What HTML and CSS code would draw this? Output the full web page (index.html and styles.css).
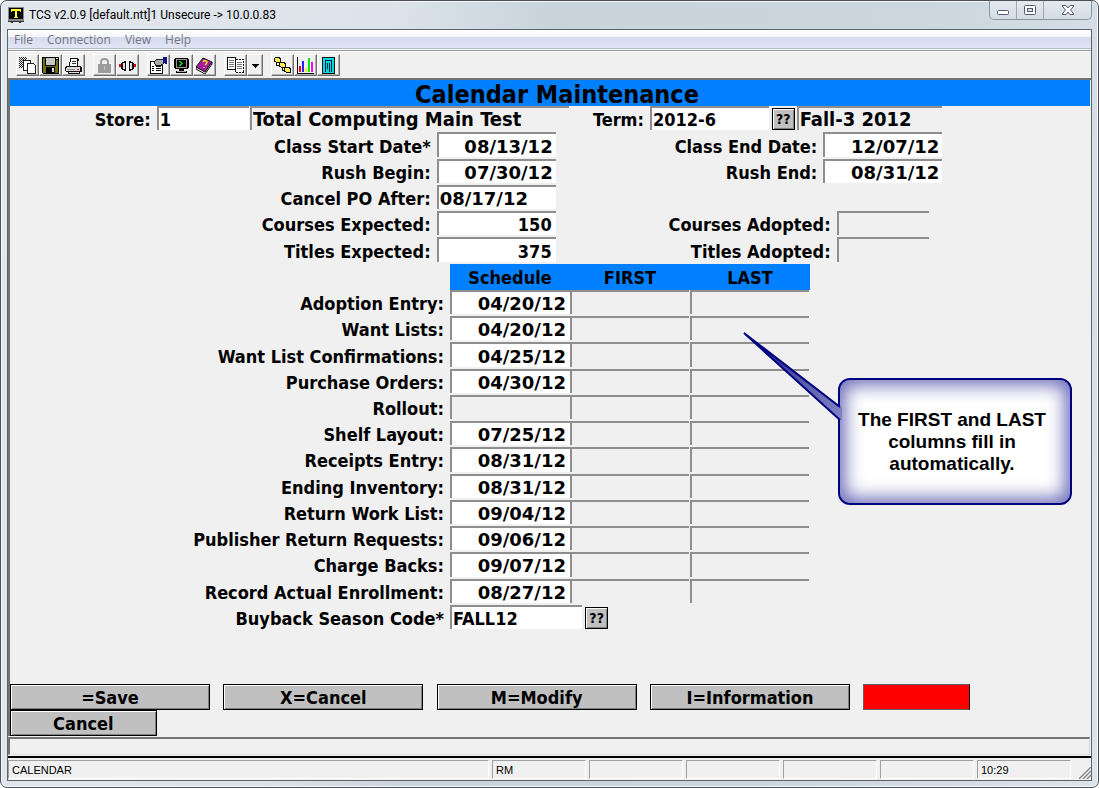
FILE: index.html
```
<!DOCTYPE html>
<html lang="en">
<head>
<meta charset="utf-8">
<title>TCS v2.0.9 - Calendar Maintenance</title>
<link rel="stylesheet" href="styles.css">
</head>
<body>
<div class="window">
  <header class="titlebar">
    <svg class="app-icon" viewBox="0 0 16 16" shape-rendering="crispEdges" aria-hidden="true"><rect width="16" height="14" fill="#8a8a8a"/><rect x="1" y="1" width="14" height="11" fill="#000"/><path d="M3 2h10v3h-1V4H9v6h1v1H6v-1h1V4H4v1H3z" fill="#ffff20"/><path d="M0 14h16v1h-3v1h-2v-1H5v1H3v-1H0z" fill="#333"/></svg>
    <h1 class="window-title">TCS v2.0.9 [default.ntt]1 Unsecure -&gt; 10.0.0.83</h1>
    <div class="caption">
      <button class="cap" aria-label="Minimize"><svg width="14" height="12" viewBox="0 0 14 12"><rect x="1.500" y="6.500" width="11" height="4" rx="1" fill="#fff" stroke="#565a70"/></svg></button>
      <button class="cap" aria-label="Maximize"><svg width="14" height="12" viewBox="0 0 14 12"><rect x="1.500" y="1.500" width="11" height="9" rx="1" fill="#fff" stroke="#565a70"/><rect x="4.500" y="4.500" width="5" height="3" fill="#d5dde6" stroke="#565a70"/></svg></button>
      <button class="cap cap-close" aria-label="Close"><svg width="14" height="12" viewBox="0 0 14 12"><path d="M1.500 1.500h3.500l2 2.500 2-2.500h3.500v1L9.500 6l3 3.500v1H9L7 8l-2 2.500H1.500v-1l3-3.500-3-3.500z" fill="#fff" stroke="#565a70"/></svg></button>
    </div>
  </header>

  <div class="client">
    <nav class="menu">
      <a href="#file">File</a><a href="#connection">Connection</a><a href="#view">View</a><a href="#help">Help</a>
    </nav>

    <div class="toolbar" role="toolbar" aria-label="Main">
      <div class="tools">
        <button class="tool" aria-label="Copy"><svg viewBox="0 0 17 17" shape-rendering="crispEdges"><defs><pattern id="dots" width="2" height="2" patternUnits="userSpaceOnUse"><path d="M0 0h1v1H0zM1 1h1v1H1z" fill="#222"/></pattern></defs><path d="M0 0h8v11H0z" fill="url(#dots)"/><path d="M4.500 3.500h7v10h-7z" fill="#fff" stroke="#222"/><path d="M8.500 6.500h6l2 2v8h-8z" fill="#fff" stroke="#222"/></svg></button>
        <button class="tool" aria-label="Save"><svg viewBox="0 0 17 17" shape-rendering="crispEdges"><path d="M0 0h17v17H1v-1H0z" fill="#000"/><path d="M1 1h2v8h11V3h2v13H1z" fill="#707010"/><path d="M4 1h9v7H4z" fill="#c8c8c8"/><path d="M4 10h9v6H4z" fill="#000"/><path d="M10 11h2v4h-2z" fill="#ddd"/><path d="M14 1h2v1h-2z" fill="#eee"/></svg></button>
        <button class="tool" aria-label="Print"><svg viewBox="0 0 17 17" shape-rendering="crispEdges"><path d="M5 1h8v1h1v2h-1v5H4V5h1z" fill="#111"/><path d="M6 2h6v7H5V5h1z" fill="#fff"/><path d="M7 4h4M7 6h4" stroke="#333"/><path d="M1 9h15v1h1v5h-2v2H3v-2H1v-1H0v-4h1z" fill="#111"/><path d="M2 10h13v1H2zM1 11h14v3H1zM4 15h10v1H4z" fill="#ddd"/><path d="M2 12h8v1H2z" fill="#888"/><path d="M12 12h2v1h-2z" fill="#e00020"/></svg></button>
      </div>
      <div class="tools">
        <button class="tool" aria-label="Secure" disabled><svg viewBox="0 0 17 17"><path d="M5 8V5q0-3 3.500-3T12 5v3" fill="none" stroke="#9c9c9c" stroke-width="2"/><path d="M2 7h13v9H2z" fill="#9c9c9c"/><path d="M8 9h1v4H8z" fill="#c4c4c4"/></svg></button>
        <button class="tool" aria-label="Connect"><svg viewBox="0 0 17 17" shape-rendering="crispEdges"><path d="M0 7h3v3H0zM14 7h3v3h-3z" fill="#d00010"/><path d="M2 6h1V5h2V4h2v10H5v-1H3v-1H2zM15 6h-1V5h-2V4h-2v10h2v-1h2v-1h1z" fill="#111"/><path d="M4 6h2v6H4zM11 6h2v6h-2z" fill="#ddd"/></svg></button>
      </div>
      <div class="tools">
        <button class="tool" aria-label="Properties"><svg viewBox="0 0 17 17" shape-rendering="crispEdges"><path d="M.5 4.500h12v12H.5z" fill="#fff" stroke="#111"/><path d="M2 9.500h2M6 9.500h5M2 11.500h2M6 11.500h5M2 13.500h2M6 13.500h5" stroke="#111"/><path d="M4 5l3-3h6v5l-3 2-2-1-2 1z" fill="#aaa" stroke="#222"/><path d="M13 0h4v7h-2l-2-2z" fill="#11118c"/></svg></button>
        <button class="tool" aria-label="Terminal"><svg viewBox="0 0 17 17" shape-rendering="crispEdges"><path d="M2 1h13v1h1v9h-1v1H2v-1H1V2h1z" fill="#000"/><path d="M3 2h11v9H3z" fill="#999"/><path d="M4 3h9v7H4z" fill="#000"/><path d="M6 4h2v1h1v1h1v1H9v1H8v1H6V8h1V7h1V6H7V5H6z" fill="#00e020"/><path d="M6 12h5v2h3v2H3v-2h3z" fill="#000"/><path d="M4 14h9v1H4z" fill="#aaa"/></svg></button>
        <button class="tool" aria-label="Help"><svg viewBox="0 0 17 17"><path d="M7 1l9 4-7 10-9-5z" fill="#a818a0" stroke="#111"/><path d="M0 10v2l9 5 7-10V5L9 15z" fill="#eee" stroke="#111"/><path d="M7 5q1-2 3-1t0 3l-1 1M8 10v1" fill="none" stroke="#ffe020" stroke-width="1.500"/></svg></button>
      </div>
      <div class="tools">
        <button class="tool" aria-label="Pages"><svg viewBox="0 0 17 17" shape-rendering="crispEdges"><path d="M.5.500h8v12h-8z" fill="#fff" stroke="#111"/><path d="M2 3.500h5M2 5.500h5M2 7.500h5M2 9.500h5" stroke="#777"/><path d="M8.500 2.500h8v13h-8z" fill="#fff" stroke="#111" stroke-dasharray="2 1"/><path d="M10 5.500h5M10 7.500h5M10 9.500h5M10 11.500h5" stroke="#777"/></svg></button>
        <button class="tool tool-drop" aria-label="More pages"><svg viewBox="0 0 7 17" shape-rendering="crispEdges"><path d="M0 7h7v1H6v1H5v1H4v1H3v-1H2V9H1V8H0z" fill="#000"/></svg></button>
      </div>
      <div class="tools">
        <button class="tool" aria-label="Flow"><svg viewBox="0 0 17 17" shape-rendering="crispEdges"><path d="M1 0h5v1h1v5H2V5H0V1h1zM6 5h5v1h1v5H7v-1H5V6h1zM11 10h5v1h1v5h-5v-1h-2v-4h1z" fill="#111"/><path d="M1 1h4v1h1v3H2V4H1zM6 6h4v1h1v3H7V9H6zM11 11h4v1h1v3h-4v-1h-1z" fill="#f8ea50"/><path d="M2.500 6v2.500H5M8.500 11v2.500H10" fill="none" stroke="#111"/></svg></button>
        <button class="tool" aria-label="Chart"><svg viewBox="0 0 17 17" shape-rendering="crispEdges"><path d="M.5 0v16.500H17" fill="none" stroke="#111"/><path d="M2 9h2v6H2z" fill="#f00"/><path d="M5 4h2v11H5z" fill="#22f"/><path d="M8 11h2v4H8z" fill="#ee0"/><path d="M11 1h2v14h-2z" fill="#0e0"/><path d="M14 5h2v10h-2z" fill="#f0f"/></svg></button>
        <button class="tool" aria-label="Ledger"><svg viewBox="0 0 17 17" shape-rendering="crispEdges"><path d="M2.500.500h12v16h-12z" fill="#00d8e0" stroke="#111"/><path d="M5 3.500h7M5.500 3v12M7.500 6v6M9.500 6v9M11.500 3v12" fill="none" stroke="#024"/></svg></button>
      </div>
    </div>

    <main class="terminal">
      <h2 class="screen-title">Calendar Maintenance</h2>

      <label class="lbl r2 c-store" for="store">Store:</label>
      <input class="field r2 f-store" id="store" value="1">
      <input class="field view large r2 f-storename" aria-label="Store name" value="Total Computing Main Test" readonly>
      <label class="lbl r2 c-term" for="term">Term:</label>
      <input class="field r2 f-term" id="term" value="2012-6">
      <button class="lookup r2 b-term" aria-label="Look up term">??</button>
      <input class="field view large r2 f-termname" aria-label="Term name" value="Fall-3 2012" readonly>

      <label class="lbl r3 c-left" for="start">Class Start Date*</label>
      <input class="field date r3 f-left" id="start" value="08/13/12">
      <label class="lbl r3 c-right" for="end">Class End Date:</label>
      <input class="field date r3 f-right" id="end" value="12/07/12">

      <label class="lbl r4 c-left" for="rushb">Rush Begin:</label>
      <input class="field date r4 f-left" id="rushb" value="07/30/12">
      <label class="lbl r4 c-right" for="rushe">Rush End:</label>
      <input class="field date r4 f-right" id="rushe" value="08/31/12">

      <label class="lbl r5 c-left" for="po">Cancel PO After:</label>
      <input class="field date start r5 f-left" id="po" value="08/17/12">

      <label class="lbl r6 c-left" for="cexp">Courses Expected:</label>
      <input class="field num r6 f-left" id="cexp" value="150">
      <label class="lbl r6 c-adopt" for="cad">Courses Adopted:</label>
      <input class="field view r6 f-adopt" id="cad" readonly>

      <label class="lbl r7 c-left" for="texp">Titles Expected:</label>
      <input class="field num r7 f-left" id="texp" value="375">
      <label class="lbl r7 c-adopt" for="tad">Titles Adopted:</label>
      <input class="field view r7 f-adopt" id="tad" readonly>

      <table class="schedule">
        <thead><tr><td></td><th scope="col">Schedule</th><th scope="col">FIRST</th><th scope="col">LAST</th></tr></thead>
        <tbody>
          <tr><th scope="row"><label for="s1">Adoption Entry:</label></th><td><input class="field date" id="s1" value="04/20/12"></td><td class="auto"></td><td class="auto"></td></tr>
          <tr><th scope="row"><label for="s2">Want Lists:</label></th><td><input class="field date" id="s2" value="04/20/12"></td><td class="auto"></td><td class="auto"></td></tr>
          <tr><th scope="row"><label for="s3">Want List Confirmations:</label></th><td><input class="field date" id="s3" value="04/25/12"></td><td class="auto"></td><td class="auto"></td></tr>
          <tr><th scope="row"><label for="s4">Purchase Orders:</label></th><td><input class="field date" id="s4" value="04/30/12"></td><td class="auto"></td><td class="auto"></td></tr>
          <tr><th scope="row"><label for="s5">Rollout:</label></th><td><input class="field view date" id="s5" readonly></td><td class="auto"></td><td class="auto"></td></tr>
          <tr><th scope="row"><label for="s6">Shelf Layout:</label></th><td><input class="field date" id="s6" value="07/25/12"></td><td class="auto"></td><td class="auto"></td></tr>
          <tr><th scope="row"><label for="s7">Receipts Entry:</label></th><td><input class="field date" id="s7" value="08/31/12"></td><td class="auto"></td><td class="auto"></td></tr>
          <tr><th scope="row"><label for="s8">Ending Inventory:</label></th><td><input class="field date" id="s8" value="08/31/12"></td><td class="auto"></td><td class="auto"></td></tr>
          <tr><th scope="row"><label for="s9">Return Work List:</label></th><td><input class="field date" id="s9" value="09/04/12"></td><td class="auto"></td><td class="auto"></td></tr>
          <tr><th scope="row"><label for="s10">Publisher Return Requests:</label></th><td><input class="field date" id="s10" value="09/06/12"></td><td class="auto"></td><td class="auto"></td></tr>
          <tr><th scope="row"><label for="s11">Charge Backs:</label></th><td><input class="field date" id="s11" value="09/07/12"></td><td class="auto"></td><td class="auto"></td></tr>
          <tr><th scope="row"><label for="s12">Record Actual Enrollment:</label></th><td><input class="field date" id="s12" value="08/27/12"></td><td class="auto"></td><td class="auto"></td></tr>
        </tbody>
      </table>

      <label class="lbl r21 c-season" for="season">Buyback Season Code*</label>
      <input class="field r21 f-season" id="season" value="FALL12">
      <button class="lookup r21 b-season" aria-label="Look up season">??</button>

      <button class="key k1">=Save</button>
      <button class="key k2">X=Cancel</button>
      <button class="key k3">M=Modify</button>
      <button class="key k4">I=Information</button>
      <button class="key k5" aria-label="Alert"></button>
      <button class="key k6">Cancel</button>

      <aside class="callout">
        <svg class="tail" viewBox="0 0 100 92" aria-hidden="true"><defs><linearGradient id="tailFill" x1="0" y1="0" x2="1" y2="1"><stop offset="0" stop-color="#000080"/><stop offset=".5" stop-color="#5252a6"/><stop offset="1" stop-color="#8484c6"/></linearGradient></defs><path d="M1 1L97 75h2v13h-2z" fill="url(#tailFill)"/><path d="M97 75L1 1l96 87" fill="none" stroke="#000080" stroke-width="2"/></svg>
        <p>The FIRST and LAST columns fill in automatically.</p>
      </aside>
    </main>

    <div class="message"></div>
    <footer class="status">
      <span class="pane wide">CALENDAR</span><span class="pane">RM</span><span class="pane"></span><span class="pane"></span><span class="pane"></span><span class="pane"></span><span class="pane">10:29</span>
      <svg class="grip" viewBox="0 0 12 12" aria-hidden="true"><path d="M0 12L12 0M4 12l8-8M8 12l4-4" stroke="#8c8c8c" stroke-width="1.500"/></svg>
    </footer>
  </div>
</div>
</body>
</html>
```
FILE: styles.css
```
* { box-sizing: border-box; }

body {
  margin: 0;
  background: #fff;
  font-family: "DejaVu Sans Condensed", "DejaVu Sans", sans-serif;
  color: #000;
}

button, input { font: inherit; color: inherit; border-radius: 0; }

/* Window frame */
.window {
  display: flex;
  flex-direction: column;
  min-height: 100vh;
  padding: 0 6px 6px;
  border: 1px solid #4c5058;
  border-radius: 7px;
  background: linear-gradient(100deg, #e2e7ed 0, #dce3ea 32%, #c9d3dc 45%, #ccd6df 75%, #dbe3eb 100%);
  box-shadow: inset 0 0 0 1px #f4f8fb;
}

.titlebar {
  display: flex;
  align-items: center;
  height: 28px;
  padding-left: 1px;
}

.app-icon { width: 16px; height: 16px; }

.window-title {
  flex: 1;
  margin: 0 0 0 5px;
  font: 12px Roboto, "Open Sans", sans-serif;
}

.caption {
  display: flex;
  align-self: flex-start;
  height: 19px;
  border: 1px solid #8c949e;
  border-top: 0;
  border-radius: 0 0 5px 5px;
  background: linear-gradient(#e3e9ef, #d3dce4);
}

.cap {
  display: grid;
  place-items: center;
  width: 27px;
  padding: 0;
  border: 0;
  border-right: 1px solid #a0a8b2;
  background: none;
}

.cap-close { width: 47px; border-right: 0; }

.client {
  display: flex;
  flex: 1;
  flex-direction: column;
  border: 1px solid #5c646c;
  background: #f0f0f0;
}

/* Menu and toolbar */
.menu {
  display: flex;
  gap: 14px;
  height: 21px;
  padding: 0 6px;
  border-bottom: 1px solid #9a9a9e;
  background: linear-gradient(#fff 0, #f2f5fa 7px, #d5dbee 7px, #e1e6f6 18px, #b4bac8 18px, #b4bac8 19px, #fafafa 19px);
  font: 12px/20px "Open Sans", sans-serif;
}

.menu a { color: #74777e; text-decoration: none; }

.toolbar {
  display: flex;
  gap: 8px;
  height: 29px;
  padding: 2px 8px 0;
  border-top: 1px solid #fff;
  border-bottom: 2px solid #747474;
}

.tools { display: flex; }

.tool {
  display: grid;
  place-items: center;
  width: 23px;
  height: 22px;
  padding: 0;
  border: 1px solid #fff;
  border-right-color: #707070;
  border-bottom-color: #707070;
  background: #f0f0f0;
  box-shadow: inset -1px -1px #b0b0b0;
}

.tool svg { width: 17px; height: 17px; }
.tool-drop { width: 16px; }
.tool-drop svg { width: 7px; }

/* Terminal screen: a character grid of 81 columns by 25 rows */
.terminal {
  position: relative;
  display: grid;
  flex: 1;
  grid-template-columns: repeat(81, minmax(0, 1fr));
  grid-template-rows: repeat(25, minmax(26px, 1fr));
  margin-right: 1px;
  border-left: 2px solid #747474;
  font-size: 18px;
  font-weight: bold;
  line-height: 21px;
}

.screen-title {
  display: flex;
  grid-area: 1 / 1 / 2 / -1;
  align-items: center;
  justify-content: center;
  margin: 0;
  padding: 2px 0 0 14px;
  background: #0080ff;
  font-size: 25px;
}

.lbl {
  align-self: center;
  padding: 1px 6px 0 0;
  text-align: right;
  white-space: nowrap;
}

.field {
  width: auto;
  min-width: 0;
  margin: 0 1px 2px 0;
  padding: 1px 0 0 1px;
  border: 0 solid #8e8e8e;
  border-width: 2px 0 0 2px;
  background: #fff;
}

.field.view { background: #f0f0f0; }
.field.large { font-size: 20px; }
.field.num { padding-right: 4px; text-align: right; }
.field.date { padding-right: 3px; font-family: "DejaVu Sans", sans-serif; text-align: right; }
.field.date.start { text-align: left; }

.lookup {
  margin: 2px;
  padding: 0;
  border: 1px solid #000;
  background: #c0c0c0;
  box-shadow: inset 1px 1px #fff, inset -1px -1px #808080;
  font-size: 14px;
  font-weight: bold;
  line-height: 20px;
}

.r2 { grid-row: 2; }
.r3 { grid-row: 3; }
.r4 { grid-row: 4; }
.r5 { grid-row: 5; }
.r6 { grid-row: 6; }
.r7 { grid-row: 7; }
.r21 { grid-row: 21; }

.c-store { grid-column: 1 / 12; }
.f-store { grid-column: 12 / 19; }
.f-storename { grid-column: 19 / 43; }
.c-term { grid-column: 43 / 49; }
.f-term { grid-column: 49 / 58; }
.b-term { grid-column: 58 / 60; }
.f-termname { grid-column: 60 / 71; }
.c-left { grid-column: 14 / 33; }
.f-left { grid-column: 33 / 42; }
.c-right { grid-column: 46 / 62; }
.f-right { grid-column: 62 / 71; }
.c-adopt { grid-column: 46 / 63; }
.f-adopt { grid-column: 63 / 70; }
.c-season { grid-column: 14 / 34; }
.f-season { grid-column: 34 / 44; }
.b-season { grid-column: 44 / 46; }

/* Schedule table */
.schedule {
  display: grid;
  grid-area: 8 / 14 / 21 / 61;
  grid-template-columns: 20fr 9fr 9fr 9fr;
  grid-template-rows: repeat(13, minmax(0, 1fr));
}

.schedule thead, .schedule tbody, .schedule tr { display: contents; }
.schedule th, .schedule td { display: grid; min-width: 0; min-height: 0; padding: 0; }
.schedule thead th { place-items: center; padding-top: 1px; background: #0080ff; }
.schedule tbody th { align-items: center; padding: 1px 6px 0 0; text-align: right; white-space: nowrap; }
.schedule .field { margin-right: 0; padding-right: 4px; }

.schedule .auto {
  margin: 0 1px 2px 0;
  border: 0 solid #8e8e8e;
  border-width: 2px 0 0 2px;
}

/* Function keys */
.key {
  padding: 1px 0 0;
  border: 1px solid #000;
  background: #c0c0c0;
  box-shadow: inset 1px 1px #fff, inset -1px -1px #808080;
  font-weight: bold;
}

.k1 { grid-area: 24 / 1 / 25 / 16; }
.k2 { grid-area: 24 / 17 / 25 / 32; }
.k3 { grid-area: 24 / 33 / 25 / 48; }
.k4 { grid-area: 24 / 49 / 25 / 64; }
.k5 {
  grid-area: 24 / 65 / 25 / 73;
  border-color: #606060;
  border-right-color: #000;
  background: #f00;
  box-shadow: none;
}
.k6 { grid-area: 25 / 1 / 26 / 12; }

/* Callout over the screen */
.callout {
  position: absolute;
  top: 298px;
  right: 18px;
  display: grid;
  place-items: center;
  width: 234px;
  height: 127px;
  padding: 0 20px 0 14px;
  border: 2px solid #000080;
  border-radius: 12px;
  background: #fff;
  box-shadow: inset 0 0 18px 5px #6a6ab8;
  font: bold 19px/22px "Liberation Sans", sans-serif;
  text-align: center;
}

.callout p { margin: 0; }

.tail {
  position: absolute;
  top: -48px;
  left: -97px;
  width: 100px;
  height: 92px;
}

/* Message line and status bar */
.message {
  height: 18px;
  margin: 1px 1px 1px 0;
  border: 2px solid #747474;
  border-right: 1px solid #d8d8d8;
  border-bottom: 1px solid #e0e0e0;
}

.status {
  display: flex;
  gap: 3px;
  height: 24px;
  padding: 2px 0 1px;
  border-top: 2px solid #000;
  font: 11px/19px "Liberation Sans", sans-serif;
}

.pane {
  width: 94px;
  padding-left: 3px;
  border: 1px solid #a0a0a0;
  border-right-color: #fff;
  border-bottom-color: #fff;
}

.pane.wide { flex: 1; }

.grip { align-self: flex-end; width: 12px; height: 12px; margin-left: 5px; }
```
